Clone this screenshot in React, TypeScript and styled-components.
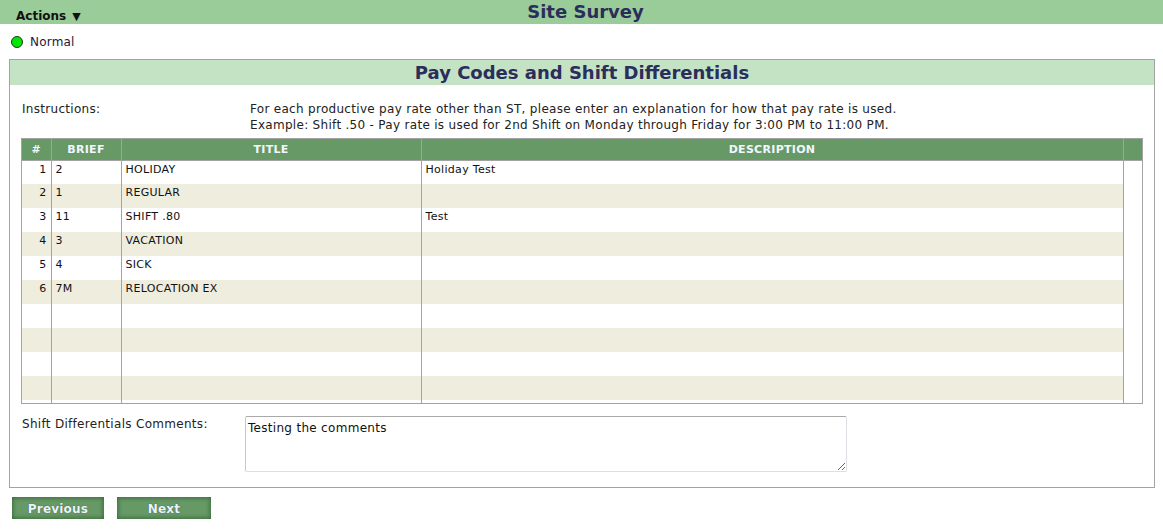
import React from "react";
import styled, { createGlobalStyle } from "styled-components";

const Global = createGlobalStyle`
  html, body { margin: 0; padding: 0; background: #fff; }
  body { font-family: "DejaVu Sans", Verdana, sans-serif; font-size: 12px; color: #111; }
  * { box-sizing: border-box; }
`;

const TopBar = styled.div`
  height: 24px;
  background: #99cc99;
  display: grid;
  grid-template-columns: 1fr auto 1fr;
  align-items: center;
`;

const ActionsMenu = styled.div`
  padding-left: 16px;
  font-weight: bold;
  font-size: 12px;
  color: #111;
  padding-top: 8px;
  align-self: stretch;
  display: flex;
  align-items: center;
  gap: 6px;
`;

const Caret = styled.span`
  font-size: 11px;
`;

const PageTitle = styled.h1`
  margin: 0;
  font-size: 18px;
  font-weight: bold;
  color: #2b2d5a;
  line-height: 24px;
  transform: translateX(4px);
`;

const StatusRow = styled.div`
  height: 35px;
  display: flex;
  align-items: center;
  gap: 7px;
  padding-left: 11px;
  padding-top: 1px;
  color: #1a1a3a;
  letter-spacing: 0.2px;
`;

const Dot = styled.span`
  width: 12px;
  height: 12px;
  border-radius: 50%;
  background: #00e600;
  border: 1px solid #1a3a1a;
`;

const Panel = styled.section`
  margin: 0 8px 0 9px;
  border: 1px solid #a3a3a3;
  padding-bottom: 15px;
`;

const PanelHeader = styled.h2`
  margin: 0;
  height: 25px;
  background: #c4e3c4;
  font-size: 18px;
  font-weight: bold;
  color: #2b2d5a;
  text-align: center;
  line-height: 26px;
`;

const FieldRow = styled.div<{ $labelWidth: number }>`
  display: grid;
  grid-template-columns: ${(p) => p.$labelWidth}px 1fr;
  padding-left: 12px;
  line-height: 16px;
  letter-spacing: 0.3px;
`;

const Instructions = styled(FieldRow)`
  padding-top: 16px;
  padding-bottom: 5px;
`;

const Comments = styled(FieldRow)`
  margin-top: 12px;
  align-items: start;
`;

const Label = styled.div`
  color: #222;
`;

const Text = styled.div`
  color: #222;
`;

const GridWrap = styled.div`
  margin: 0 11px 0 11px;
  border: 1px solid #a3a3a3;
`;

const Table = styled.table`
  width: 100%;
  border-collapse: collapse;
  table-layout: fixed;
  font-size: 11px;
  letter-spacing: 0.3px;
`;

const HeadCell = styled.th<{ $w?: number }>`
  ${(p) => (p.$w ? `width: ${p.$w}px;` : "")}
  background: #669966;
  color: #f4f6ff;
  font-weight: bold;
  font-size: 11px;
  height: 21px;
  padding: 1px 0 0;
  border-left: 1px solid #a3a3a3;
  border-bottom: 1px solid #a3a3a3;
  text-align: center;
  &:first-child { border-left: none; }
`;

const Row = styled.tr<{ $alt: boolean }>`
  background: ${(p) => (p.$alt ? "#efedde" : "#fff")};
`;

const Cell = styled.td<{ $align?: string }>`
  height: 24px;
  padding: 2px 4px 0;
  line-height: 13px;
  vertical-align: top;
  border-left: 1px solid #a3a3a3;
  text-align: ${(p) => p.$align ?? "left"};
  color: #111;
  white-space: nowrap;
  overflow: hidden;
  &:first-child { border-left: none; }
`;

const Gutter = styled.td`
  background: #fff;
  border-left: 1px solid #a3a3a3;
  padding: 0;
`;

const FillerCell = styled.td`
  height: 3px;
  padding: 0;
  background: #fff;
  border-left: 1px solid #a3a3a3;
  &:first-child { border-left: none; }
`;

const CommentBox = styled.textarea`
  width: 602px;
  height: 56px;
  font-family: "DejaVu Sans", Verdana, sans-serif;
  font-size: 12px;
  letter-spacing: 0.3px;
  color: #111;
  padding: 4px 2px;
  border: 1px solid #c8c8c8;
  border-top-color: #a9a9a9;
  border-right-color: #dcdfe4;
  border-bottom-color: #dcdfe4;
  border-radius: 2px;
  line-height: 14px;
  outline: none;
`;

const ButtonRow = styled.div`
  display: flex;
  gap: 13px;
  padding: 9px 0 0 12px;
`;

const NavButton = styled.button<{ $w: number }>`
  width: ${(p) => p.$w}px;
  height: 22px;
  background: #669966;
  border: none;
  box-shadow: inset 0 0 4px 1px #3b6a3b;
  color: #eef2ff;
  font-family: "DejaVu Sans", Verdana, sans-serif;
  font-weight: bold;
  font-size: 12px;
  letter-spacing: 0.2px;
  padding: 1px 0 0;
  cursor: pointer;
  text-shadow: 0 0 1px #2d4f2d;
`;

const rows = [
  ["1", "2", "HOLIDAY", "Holiday Test"],
  ["2", "1", "REGULAR", ""],
  ["3", "11", "SHIFT .80", "Test"],
  ["4", "3", "VACATION", ""],
  ["5", "4", "SICK", ""],
  ["6", "7M", "RELOCATION EX", ""],
  ["", "", "", ""],
  ["", "", "", ""],
  ["", "", "", ""],
  ["", "", "", ""],
];

export default function App() {
  return (
    <>
      <Global />
      <TopBar>
        <ActionsMenu>
          Actions <Caret>▼</Caret>
        </ActionsMenu>
        <PageTitle>Site Survey</PageTitle>
        <div />
      </TopBar>
      <StatusRow>
        <Dot />
        <span>Normal</span>
      </StatusRow>
      <Panel>
        <PanelHeader>Pay Codes and Shift Differentials</PanelHeader>
        <Instructions $labelWidth={228}>
          <Label>Instructions:</Label>
          <Text>
            For each productive pay rate other than ST, please enter an explanation for how that pay rate is used.
            <br />
            Example: Shift .50 - Pay rate is used for 2nd Shift on Monday through Friday for 3:00 PM to 11:00 PM.
          </Text>
        </Instructions>
        <GridWrap>
          <Table>
            <thead>
              <tr>
                <HeadCell $w={29}>#</HeadCell>
                <HeadCell $w={70}>BRIEF</HeadCell>
                <HeadCell $w={300}>TITLE</HeadCell>
                <HeadCell>DESCRIPTION</HeadCell>
                <HeadCell $w={19}></HeadCell>
              </tr>
            </thead>
            <tbody>
              {rows.map((r, i) => (
                <Row key={i} $alt={i % 2 === 1}>
                  <Cell $align="right">{r[0]}</Cell>
                  <Cell>{r[1]}</Cell>
                  <Cell>{r[2]}</Cell>
                  <Cell>{r[3]}</Cell>
                  <Gutter />
                </Row>
              ))}
              <tr>
                <FillerCell />
                <FillerCell />
                <FillerCell />
                <FillerCell />
                <FillerCell />
              </tr>
            </tbody>
          </Table>
        </GridWrap>
        <Comments $labelWidth={223}>
          <Label>Shift Differentials Comments:</Label>
          <CommentBox defaultValue="Testing the comments" />
        </Comments>
      </Panel>
      <ButtonRow>
        <NavButton $w={92}>Previous</NavButton>
        <NavButton $w={94}>Next</NavButton>
      </ButtonRow>
    </>
  );
}
